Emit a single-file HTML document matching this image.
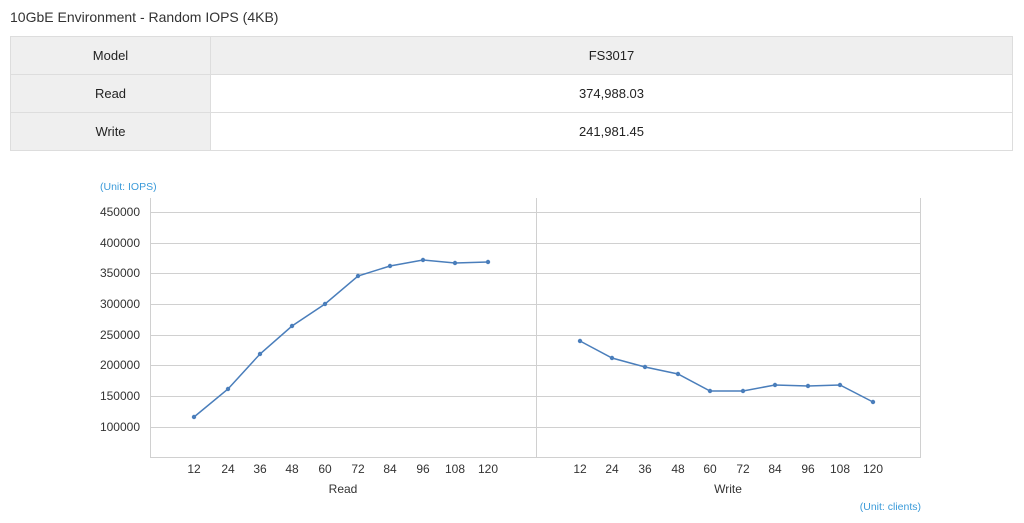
<!DOCTYPE html>
<html><head><style>
body{margin:0;background:#fff;font-family:"Liberation Sans",Arial,sans-serif;width:1024px;height:523px;overflow:hidden;position:relative}
.t{position:absolute;left:10px;top:9px;font-size:14px;color:#333}
table{position:absolute;left:10px;top:36px;width:1003px;border-collapse:collapse;font-size:13px;color:#222}
td{border:1px solid #ddd;height:37px;padding:0;text-align:center}
td.h{background:#efefef;width:199px}
tr.hd td{background:#efefef}
svg{position:absolute;left:0;top:0}
</style></head><body>
<div class="t">10GbE Environment - Random IOPS (4KB)</div>
<table>
<tr class="hd"><td class="h">Model</td><td>FS3017</td></tr>
<tr><td class="h">Read</td><td>374,988.03</td></tr>
<tr><td class="h">Write</td><td>241,981.45</td></tr>
</table>
<svg width="1024" height="523" font-family="Liberation Sans, Arial, sans-serif" font-size="12" fill="#333">
<text x="100" y="190" font-size="10.5" fill="#3a9ad9">(Unit: IOPS)</text>
<g stroke="#d0d0d0" stroke-width="1">
<line x1="150" y1="212.5" x2="920" y2="212.5"/>
<line x1="150" y1="243.5" x2="920" y2="243.5"/>
<line x1="150" y1="273.5" x2="920" y2="273.5"/>
<line x1="150" y1="304.5" x2="920" y2="304.5"/>
<line x1="150" y1="335.5" x2="920" y2="335.5"/>
<line x1="150" y1="365.5" x2="920" y2="365.5"/>
<line x1="150" y1="396.5" x2="920" y2="396.5"/>
<line x1="150" y1="427.5" x2="920" y2="427.5"/>
<line x1="150.5" y1="198" x2="150.5" y2="458"/>
<line x1="536.5" y1="198" x2="536.5" y2="458"/>
<line x1="920.5" y1="198" x2="920.5" y2="458"/>
<line x1="150" y1="457.5" x2="921" y2="457.5"/>
</g>
<g text-anchor="end">
<text x="140" y="216">450000</text><text x="140" y="247">400000</text><text x="140" y="277">350000</text><text x="140" y="308">300000</text><text x="140" y="339">250000</text><text x="140" y="369">200000</text><text x="140" y="400">150000</text><text x="140" y="431">100000</text>
</g>
<g text-anchor="middle">
<text x="194" y="473">12</text><text x="228" y="473">24</text><text x="260" y="473">36</text><text x="292" y="473">48</text><text x="325" y="473">60</text><text x="358" y="473">72</text><text x="390" y="473">84</text><text x="423" y="473">96</text><text x="455" y="473">108</text><text x="488" y="473">120</text>
<text x="343" y="493">Read</text>
<text x="580" y="473">12</text><text x="612" y="473">24</text><text x="645" y="473">36</text><text x="678" y="473">48</text><text x="710" y="473">60</text><text x="743" y="473">72</text><text x="775" y="473">84</text><text x="808" y="473">96</text><text x="840" y="473">108</text><text x="873" y="473">120</text>
<text x="728" y="493">Write</text>
</g>
<text x="921" y="510" font-size="10.5" fill="#3a9ad9" text-anchor="end">(Unit: clients)</text>
<g fill="none" stroke="#4a7ebb" stroke-width="1.5">
<polyline points="194,417 228,389 260,354 292,326 325,304 358,276 390,266 423,260 455,263 488,262"/>
<polyline points="580,341 612,358 645,367 678,374 710,391 743,391 775,385 808,386 840,385 873,402"/>
</g>
<g fill="#4a7ebb">
<circle cx="194" cy="417" r="2.2"/><circle cx="228" cy="389" r="2.2"/><circle cx="260" cy="354" r="2.2"/><circle cx="292" cy="326" r="2.2"/><circle cx="325" cy="304" r="2.2"/><circle cx="358" cy="276" r="2.2"/><circle cx="390" cy="266" r="2.2"/><circle cx="423" cy="260" r="2.2"/><circle cx="455" cy="263" r="2.2"/><circle cx="488" cy="262" r="2.2"/>
<circle cx="580" cy="341" r="2.2"/><circle cx="612" cy="358" r="2.2"/><circle cx="645" cy="367" r="2.2"/><circle cx="678" cy="374" r="2.2"/><circle cx="710" cy="391" r="2.2"/><circle cx="743" cy="391" r="2.2"/><circle cx="775" cy="385" r="2.2"/><circle cx="808" cy="386" r="2.2"/><circle cx="840" cy="385" r="2.2"/><circle cx="873" cy="402" r="2.2"/>
</g>
</svg>
</body></html>
